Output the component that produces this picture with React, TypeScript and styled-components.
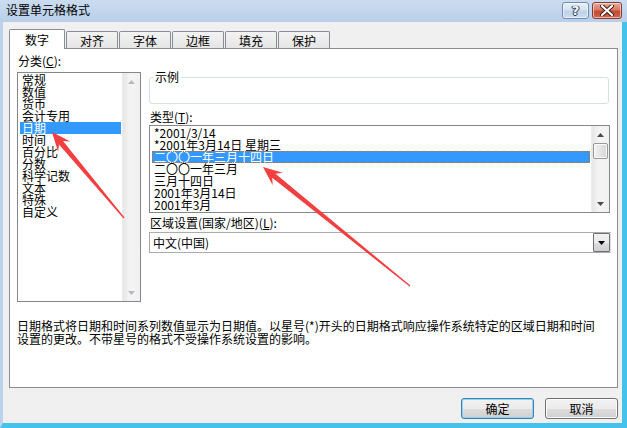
import styled, { createGlobalStyle } from 'styled-components';

const GlobalStyle = createGlobalStyle`
  html, body {
    margin: 0;
    padding: 0;
    background: #ffffff;
  }
  body {
    font-family: "Noto Sans CJK SC", "DejaVu Sans", sans-serif;
    font-size: 12px;
    color: #000;
  }
`;

const FONT = `"Noto Sans CJK SC", "DejaVu Sans", sans-serif`;

const Window = styled.div`
  position: relative;
  width: 627px;
  height: 428px;
  display: flex;
  flex-direction: column;
  background: #bcd2ea;
  overflow: hidden;
  font-family: ${FONT};
  font-size: 12px;
`;

const TitleBar = styled.div`
  height: 22px;
  flex-shrink: 0;
  display: flex;
  align-items: flex-start;
  padding: 0 5px 0 6px;
  background: linear-gradient(#cbdcf0, #b8cfe9);
`;

const Title = styled.div`
  flex: 1;
  line-height: 20px;
  font-size: 12px;
  color: #000;
`;

const CaptionButton = styled.div<{ $close?: boolean }>`
  width: ${(p) => (p.$close ? 30 : 27)}px;
  height: 17px;
  margin-top: 2px;
  margin-left: ${(p) => (p.$close ? 3 : 0)}px;
  box-sizing: border-box;
  border-radius: 3px;
  border: 1px solid ${(p) => (p.$close ? '#8a3a2c' : '#6f8cb2')};
  background: ${(p) =>
    p.$close
      ? 'linear-gradient(#e9a99b 0%, #d77b68 45%, #c44a33 55%, #d0654d 100%)'
      : 'linear-gradient(#e8f0f9 0%, #d4e2f2 45%, #bed2ea 55%, #cddcef 100%)'};
  box-shadow: inset 0 0 0 1px rgba(255, 255, 255, 0.55);
  display: flex;
  align-items: center;
  justify-content: center;
  color: #fff;
  font-family: "DejaVu Sans", sans-serif;
  font-weight: bold;
  font-size: 13px;
  text-shadow: 0 0 1px #2b3a50, 0 0 1px #2b3a50, 1px 0 0 #2b3a50, -1px 0 0 #2b3a50, 0 1px 0 #2b3a50;
`;

const Frame = styled.div`
  flex: 1;
  display: flex;
  border-left: 3px solid #bcd2ea;
  border-right: 6px solid #45c2ec;
  border-bottom: 5px solid #45c2ec;
`;

const Body = styled.div`
  flex: 1;
  background: #f0f0f0;
  padding: 7px 4px 0 6px;
  display: flex;
  flex-direction: column;
`;

const TabStrip = styled.div`
  height: 19px;
  display: flex;
  align-items: flex-start;
  gap: 1px;
`;

const Tab = styled.div<{ $active?: boolean; $w: number }>`
  position: relative;
  z-index: ${(p) => (p.$active ? 2 : 0)};
  width: ${(p) => p.$w}px;
  height: ${(p) => (p.$active ? 20 : 17)}px;
  margin-top: ${(p) => (p.$active ? 0 : 2)}px;
  box-sizing: border-box;
  border: 1px solid #898c95;
  border-bottom: none;
  border-radius: 2px 2px 0 0;
  background: ${(p) => (p.$active ? '#ffffff' : 'linear-gradient(#f3f3f3, #e5e5e5)')};
  display: flex;
  align-items: center;
  justify-content: center;
  font-size: 12px;
  line-height: 12px;
  padding-top: ${(p) => (p.$active ? 0 : 1)}px;
`;

const Panel = styled.div`
  position: relative;
  z-index: 1;
  height: 340px;
  box-sizing: border-box;
  border: 1px solid #898c95;
  background: #ffffff;
  padding: 6px 6px 0 7px;
  display: flex;
  flex-direction: column;
`;

const Columns = styled.div`
  display: grid;
  grid-template-columns: 124px 462px;
  column-gap: 8px;
  align-items: start;
`;

const Column = styled.div`
  display: flex;
  flex-direction: column;
`;

const Label = styled.div<{ $top?: number; $bottom?: number }>`
  line-height: 12px;
  height: 12px;
  font-size: 12px;
  margin-top: ${(p) => p.$top ?? 0}px;
  margin-bottom: ${(p) => p.$bottom ?? 0}px;
  padding-left: 1px;
  white-space: nowrap;
`;

const ListBox = styled.div<{ $h: number; $pad: number }>`
  height: ${(p) => p.$h}px;
  box-sizing: border-box;
  border: 1px solid #828790;
  background: #fff;
  display: flex;
`;

const ListItems = styled.div<{ $pad: number }>`
  flex: 1;
  padding: ${(p) => p.$pad}px 1px 0 2px;
  display: flex;
  flex-direction: column;
`;

const Item = styled.div<{ $selected?: boolean; $focus?: boolean }>`
  height: 12px;
  line-height: 12px;
  font-size: 12px;
  white-space: nowrap;
  box-sizing: border-box;
  padding-left: 2px;
  background: ${(p) => (p.$selected ? '#3399ff' : 'transparent')};
  color: ${(p) => (p.$selected ? '#ffffff' : '#000000')};
  outline: ${(p) => (p.$focus ? '1px dotted #c8702a' : 'none')};
  outline-offset: -1px;
`;

const ScrollBar = styled.div`
  width: 17px;
  display: flex;
  flex-direction: column;
  align-items: center;
  background: linear-gradient(90deg, #e6e6e6, #f4f4f4 40%, #f1f1f1);
  border-left: 1px solid #ececec;
`;

const ScrollArrow = styled.div`
  height: 17px;
  width: 100%;
  display: flex;
  align-items: center;
  justify-content: center;
`;

const Thumb = styled.div`
  width: 15px;
  height: 16px;
  box-sizing: border-box;
  border: 1px solid #979797;
  border-radius: 2px;
  background: linear-gradient(90deg, #f3f3f3, #e4e4e4 50%, #d6d6d6);
  box-shadow: inset 0 0 0 1px #fbfbfb;
`;

const Spacer = styled.div`
  flex: 1;
`;

const GroupBox = styled.fieldset`
  margin: 16px 0 0 0;
  padding: 0;
  height: 33px;
  box-sizing: border-box;
  border: 1px solid #d5dfe5;
  border-radius: 3px;
  width: 460px;
`;

const Legend = styled.legend`
  margin-left: 3px;
  padding: 0 2px;
  line-height: 12px;
  font-size: 12px;
`;

const ComboBox = styled.div`
  margin-top: 3px;
  height: 21px;
  box-sizing: border-box;
  border: 1px solid #abadb3;
  border-color: #abadb3 #dbdfe6 #e3e9ef #e2e3ea;
  border-left-color: #a3a6ad;
  border-bottom-color: #a9acb3;
  background: #fff;
  display: flex;
  align-items: center;
  padding-left: 3px;
`;

const ComboText = styled.div`
  flex: 1;
  line-height: 12px;
`;

const ComboButton = styled.div`
  width: 17px;
  height: 19px;
  box-sizing: border-box;
  border: 1px solid #707070;
  border-radius: 1px;
  background: linear-gradient(#f2f2f2 0%, #ebebeb 50%, #dddddd 51%, #cfcfcf 100%);
  display: flex;
  align-items: center;
  justify-content: center;
`;

const Description = styled.div`
  margin-top: 17px;
  line-height: 13px;
  font-size: 12px;
  white-space: nowrap;
`;

const ButtonRow = styled.div`
  margin-top: 10px;
  display: flex;
  justify-content: flex-end;
  gap: 11px;
`;

const Button = styled.div<{ $default?: boolean }>`
  width: 73px;
  height: 21px;
  box-sizing: border-box;
  border: 1px solid ${(p) => (p.$default ? '#3c7fb1' : '#707070')};
  border-radius: 3px;
  background: linear-gradient(#f2f2f2 0%, #ebebeb 50%, #dddddd 51%, #cfcfcf 100%);
  box-shadow: ${(p) => (p.$default ? 'inset 0 0 0 1px #8ad6f5' : 'inset 0 0 0 1px #fcfcfc')};
  display: flex;
  align-items: center;
  justify-content: center;
  font-size: 12px;
  line-height: 12px;
`;

const Overlay = styled.svg`
  position: absolute;
  left: 0;
  top: 0;
  pointer-events: none;
  z-index: 5;
`;

function arrowPoints(tx: number, ty: number, hx: number, hy: number) {
  const dx = hx - tx;
  const dy = hy - ty;
  const len = Math.hypot(dx, dy);
  const ux = dx / len;
  const uy = dy / len;
  const px = -uy;
  const py = ux;
  const headLen = 19;
  const headW = 8;
  const neckW = 2.6;
  const tailW = 0.6;
  const bx = hx - ux * headLen;
  const by = hy - uy * headLen;
  const nx = hx - ux * (headLen - 5);
  const ny = hy - uy * (headLen - 5);
  const pts = [
    [tx + px * tailW, ty + py * tailW],
    [nx + px * neckW, ny + py * neckW],
    [bx + px * headW, by + py * headW],
    [hx, hy],
    [bx - px * headW, by - py * headW],
    [nx - px * neckW, ny - py * neckW],
    [tx - px * tailW, ty - py * tailW],
  ];
  return pts.map((p) => `${p[0].toFixed(1)},${p[1].toFixed(1)}`).join(' ');
}

function Triangle({ up, color }: { up?: boolean; color: string }) {
  return (
    <svg width="7" height="4" viewBox="0 0 7 4">
      <polygon points={up ? '3.5,0 7,4 0,4' : '0,0 7,0 3.5,4'} fill={color} />
    </svg>
  );
}

const categories = ['常规', '数值', '货币', '会计专用', '日期', '时间', '百分比', '分数', '科学记数', '文本', '特殊', '自定义'];

const types = [
  '*2001/3/14',
  '*2001年3月14日 星期三',
  '二〇〇一年三月十四日',
  '二〇〇一年三月',
  '三月十四日',
  '2001年3月14日',
  '2001年3月',
];

const tabs = [
  { name: '数字', w: 56 },
  { name: '对齐', w: 52 },
  { name: '字体', w: 52 },
  { name: '边框', w: 52 },
  { name: '填充', w: 52 },
  { name: '保护', w: 52 },
];

export default function App() {
  return (
    <>
      <GlobalStyle />
      <Window>
        <TitleBar>
          <Title>设置单元格格式</Title>
          <CaptionButton>?</CaptionButton>
          <CaptionButton $close>
            <svg width="14" height="11" viewBox="0 0 14 11">
              <path d="M2 1 L12 10 M12 1 L2 10" stroke="#3a1a14" strokeWidth="4" strokeLinecap="round" />
              <path d="M2 1 L12 10 M12 1 L2 10" stroke="#ffffff" strokeWidth="2.2" strokeLinecap="round" />
            </svg>
          </CaptionButton>
        </TitleBar>
        <Frame>
          <Body>
            <TabStrip>
              {tabs.map((t, i) => (
                <Tab key={t.name} $active={i === 0} $w={t.w}>
                  {t.name}
                </Tab>
              ))}
            </TabStrip>
            <Panel>
              <Columns>
                <Column>
                  <Label $bottom={5}>
                    分类(<u>C</u>):
                  </Label>
                  <ListBox $h={230} $pad={1}>
                    <ListItems $pad={1}>
                      {categories.map((c, i) => (
                        <Item key={c} $selected={i === 4}>
                          {c}
                        </Item>
                      ))}
                    </ListItems>
                    <ScrollBar>
                      <ScrollArrow>
                        <Triangle up color="#b9b9b9" />
                      </ScrollArrow>
                      <Spacer />
                      <ScrollArrow>
                        <Triangle color="#b9b9b9" />
                      </ScrollArrow>
                    </ScrollBar>
                  </ListBox>
                </Column>
                <Column>
                  <GroupBox>
                    <Legend>示例</Legend>
                  </GroupBox>
                  <Label $top={7} $bottom={2}>
                    类型(<u>T</u>):
                  </Label>
                  <ListBox $h={88} $pad={2} style={{ width: 461 }}>
                    <ListItems $pad={1}>
                      {types.map((t, i) => (
                        <Item key={t} $selected={i === 2} $focus={i === 2}>
                          {t}
                        </Item>
                      ))}
                    </ListItems>
                    <ScrollBar>
                      <ScrollArrow>
                        <Triangle up color="#4a4a4a" />
                      </ScrollArrow>
                      <Thumb />
                      <Spacer />
                      <ScrollArrow>
                        <Triangle color="#4a4a4a" />
                      </ScrollArrow>
                    </ScrollBar>
                  </ListBox>
                  <Label $top={4}>
                    区域设置(国家/地区)(<u>L</u>):
                  </Label>
                  <ComboBox>
                    <ComboText>中文(中国)</ComboText>
                    <ComboButton>
                      <Triangle color="#000000" />
                    </ComboButton>
                  </ComboBox>
                </Column>
              </Columns>
              <Description>
                日期格式将日期和时间系列数值显示为日期值。以星号(*)开头的日期格式响应操作系统特定的区域日期和时间
                <br />
                设置的更改。不带星号的格式不受操作系统设置的影响。
              </Description>
            </Panel>
            <ButtonRow>
              <Button $default>确定</Button>
              <Button>取消</Button>
            </ButtonRow>
          </Body>
        </Frame>
        <Overlay width="627" height="428" viewBox="0 0 627 428">
          <polygon points={arrowPoints(124, 218, 52, 132)} fill="#f24040" />
          <polygon points={arrowPoints(410, 286, 263, 167)} fill="#f24040" />
        </Overlay>
      </Window>
    </>
  );
}
